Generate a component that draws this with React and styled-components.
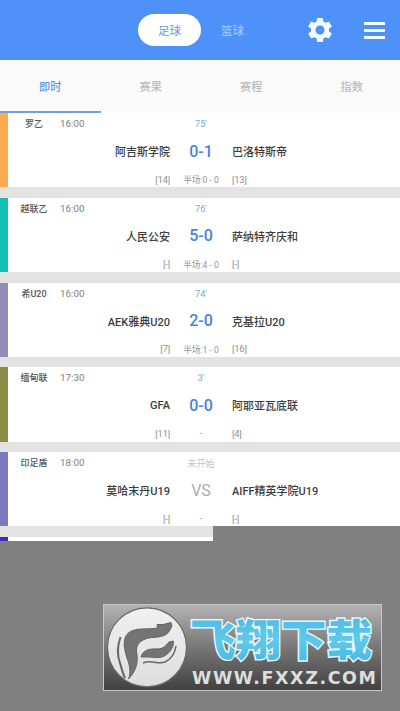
import React from 'react'
import styled, { createGlobalStyle } from 'styled-components'
import { MdSettings } from 'react-icons/md'

const GlobalStyle = createGlobalStyle`
    * {
        box-sizing: border-box;
    }
    body {
        margin: 0;
        overflow: hidden;
        background: #808080;
        font-family: Roboto, 'Noto Sans CJK SC', sans-serif;
    }
`

const Screen = styled.div`
    width: 400px;
    height: 711px;
    overflow: hidden;
    background: #808080;
`

const Header = styled.header`
    display: flex;
    align-items: center;
    height: 60px;
    padding: 0 15px 0 138px;
    background: #4d91f9;
    color: #fff;
`

const Sport = styled.button`
    width: 63px;
    height: 32px;
    padding: 1px 0 0;
    border: 0;
    border-radius: 16px;
    background: ${props => props.$active ? '#fff' : 'transparent'};
    color: ${props => props.$active ? '#6099e4' : '#a8cdfc'};
    font: 11.5px/32px Roboto, 'Noto Sans CJK SC', sans-serif;
`

const Actions = styled.div`
    display: flex;
    align-items: center;
    gap: 29px;
    margin-left: auto;
`

const Menu = styled.div`
    display: flex;
    flex-direction: column;
    justify-content: space-between;
    width: 21px;
    height: 17px;
    margin-top: 1px;
`

const Bar = styled.span`
    height: 3px;
    background: #f2fbff;
`

const Tabs = styled.nav`
    display: grid;
    grid-template-columns: repeat(4, 100.5px);
    height: 53px;
    background: #fafafa;
`

const Tab = styled.div`
    height: 53px;
    border-bottom: 2px solid ${props => props.$active ? '#709fe2' : 'transparent'};
    color: ${props => props.$active ? '#5c98e3' : '#bcbcbc'};
    font-size: 11.2px;
    font-weight: 500;
    line-height: 56px;
    text-align: center;
`

const List = styled.main`
    height: 413px;
    overflow: hidden;
    background: #e3e3e3;
`

const Card = styled.article`
    display: grid;
    grid-template-columns: 162px 62px 1fr;
    grid-template-rows: 21px 34px 22px;
    align-items: center;
    height: 74.2px;
    margin-bottom: 10.6px;
    border-left: 8px solid ${props => props.$color};
    background: #fff;
    white-space: nowrap;
`

const Info = styled.div`
    display: flex;
    align-items: center;
    color: #808080;
    font-size: 9.8px;
`

const League = styled.span`
    width: 52px;
    color: #555;
    font-size: 9px;
    font-weight: 500;
    text-align: center;
`

const Minute = styled.div`
    grid-column: span 2;
    padding-right: 168px;
    color: ${props => props.$idle ? '#c5c5c5' : '#76a9dc'};
    font-size: 9.2px;
    text-align: center;
`

const Team = styled.div`
    color: #3c3c3c;
    font-size: 11px;
    font-weight: 500;
    text-align: ${props => props.$home ? 'right' : 'left'};
`

const Score = styled.div`
    color: ${props => props.$idle ? '#aaa' : '#4783dc'};
    font-size: 16px;
    font-weight: ${props => props.$idle ? 400 : 500};
    text-align: center;
`

const Rank = styled.div`
    color: #909090;
    font-size: 9.4px;
    letter-spacing: -0.2px;
    text-align: ${props => props.$home ? 'right' : 'left'};
`

const Half = styled.div`
    color: #959595;
    font-size: 8.6px;
    text-align: center;
`

const Remainder = styled.div`
    width: 213px;
    height: 15px;
    padding-top: 11px;
    background: #e3e3e3;
`

const NextCard = styled.div`
    height: 4px;
    border-left: 8px solid #382bd0;
    background: #fff;
`

const Brand = styled.footer`
    width: 279px;
    height: 87px;
    margin: 63px 0 0 103px;
    border: 1px solid #c6c6c6;
    background: linear-gradient(#b3b3b3, #777 50%, #414141);
`

const Art = styled.svg`
    display: block;
    overflow: visible;
`

const matches = [
    { color: '#ffa950', league: '罗乙', time: '16:00', minute: "75'", home: '阿吉斯学院', score: '0-1', away: '巴洛特斯帝', ranks: ['[14]', '[13]'], half: '半场:0 - 0' },
    { color: '#12bfb5', league: '越联乙', time: '16:00', minute: "76'", home: '人民公安', score: '5-0', away: '萨纳特齐庆和', ranks: ['[-]', '[-]'], half: '半场:4 - 0' },
    { color: '#918fb8', league: '希U20', time: '16:00', minute: "74'", home: 'AEK雅典U20', score: '2-0', away: '克基拉U20', ranks: ['[7]', '[16]'], half: '半场:1 - 0' },
    { color: '#8b8d46', league: '缅甸联', time: '17:30', minute: "3'", home: 'GFA', score: '0-0', away: '阿耶亚瓦底联', ranks: ['[11]', '[4]'], half: '-' },
    { color: '#7d79c1', league: '印足盾', time: '18:00', minute: '未开始', home: '莫哈末丹U19', score: 'VS', away: 'AIFF精英学院U19', ranks: ['[-]', '[-]'], half: '-', idle: true },
]

function Match({ match }) {
    return (
        <Card $color={match.color}>
            <Info>
                <League>{match.league}</League>
                <span>{match.time}</span>
            </Info>
            <Minute $idle={match.idle}>{match.minute}</Minute>
            <Team $home>{match.home}</Team>
            <Score $idle={match.idle}>{match.score}</Score>
            <Team>{match.away}</Team>
            <Rank $home>{match.ranks[0]}</Rank>
            <Half>{match.half}</Half>
            <Rank>{match.ranks[1]}</Rank>
        </Card>
    )
}

function Logo() {
    return (
        <Art width="277" height="85" viewBox="104 605 277 85">
            <defs>
                <linearGradient id="blue" x1="0" y1="0" x2="0" y2="1">
                    <stop offset="0" stopColor="#4db4de" />
                    <stop offset=".55" stopColor="#5fc9ec" />
                    <stop offset="1" stopColor="#42b3dc" />
                </linearGradient>
                <linearGradient id="disc" x1="0" y1="0" x2="0" y2="1">
                    <stop offset="0" stopColor="#f0f0f0" />
                    <stop offset="1" stopColor="#dedede" />
                </linearGradient>
            </defs>
            <circle cx="147" cy="647.3" r="39.5" fill="url(#disc)" stroke="#666" strokeWidth="1.2" />
            <path d="M128.5 679 C131 673 130 666 127 658 C123 646 123 637 129 632.5 C137 627 148 630 157.5 628 L157 624.5 L163 624.5 L171 622.5 L172 626 L170 630 C167 636 160 637 153 637.5 C143 638 136 643 136.5 651 C138 660 138 669 128.5 679 Z" fill="#747474" stroke="#646464" />
            <path d="M141 657 C143 650 149 648.5 157 649 C164 649 166 645 169 642 L173.5 641 L173 646 C169 655 163 658 156 657.5 C150 657 146 657 141 657 Z" fill="#747474" stroke="#646464" />
            <path d="M143 663 C151 659 157 665 165 662 C171 659 175 653 176 646" fill="none" stroke="#686868" strokeWidth="1.6" />
            <path d="M120.5 637 C117 647 117 655 120 663 C122 670 123 674 125 678" fill="none" stroke="#666" strokeWidth="2" />
            <text x="190" y="656" textLength="182" lengthAdjust="spacingAndGlyphs" fontFamily="Noto Sans CJK SC, sans-serif" fontSize="43.5" fontWeight="900" fill="url(#blue)" stroke="#e5faff" strokeWidth="2.8" paintOrder="stroke">飞翔下载</text>
            <text x="192" y="683.5" textLength="184" fontFamily="DejaVu Sans, sans-serif" fontSize="17.5" fontWeight="700" fill="#dedede">WWW.FXXZ.COM</text>
        </Art>
    )
}

function App() {
    return (
        <Screen>
            <GlobalStyle />
            <Header>
                <Sport $active>足球</Sport>
                <Sport>篮球</Sport>
                <Actions>
                    <MdSettings size={30} color="#f2fbff" />
                    <Menu>
                        <Bar />
                        <Bar />
                        <Bar />
                    </Menu>
                </Actions>
            </Header>
            <Tabs>
                <Tab $active>即时</Tab>
                <Tab>赛果</Tab>
                <Tab>赛程</Tab>
                <Tab>指数</Tab>
            </Tabs>
            <List>
                {matches.map(match => <Match key={match.home} match={match} />)}
            </List>
            <Remainder>
                <NextCard />
            </Remainder>
            <Brand>
                <Logo />
            </Brand>
        </Screen>
    )
}

export default App
